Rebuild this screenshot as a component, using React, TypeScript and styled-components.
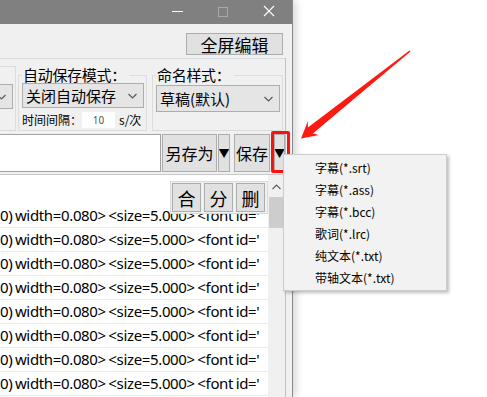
import React from 'react';
import styled, { createGlobalStyle } from 'styled-components';

const cjk = `"Noto Sans CJK SC", "Noto Sans", sans-serif`;
const latin = `"Noto Sans", "Noto Sans CJK SC", sans-serif`;

const GlobalStyle = createGlobalStyle`
  html, body {
    margin: 0;
    padding: 0;
    background: #ffffff;
  }
  body {
    font-family: ${cjk};
  }
`;

const rows = Array.from({ length: 8 }, () => `0) width=0.080> <size=5.000> <font id='`);
const saveTypes = ['字幕(*.srt)', '字幕(*.ass)', '字幕(*.bcc)', '歌词(*.lrc)', '纯文本(*.txt)', '带轴文本(*.txt)'];

const Chevron = ({ up }: { up?: boolean }) => (
    <svg width="9" height="6" viewBox="0 0 9 6">
        <polyline
            points={up ? '0.5,5 4.5,1 8.5,5' : '0.5,1 4.5,5 8.5,1'}
            fill="none"
            stroke={up ? '#606060' : '#5a5a5a'}
            strokeWidth="1.2"
        />
    </svg>
);

export default function App() {
    return (
        <Page>
            <GlobalStyle />
            <Window>
                <TitleBar>
                    <CaptionButton>
                        <svg width="46" height="24"><line x1="18" y1="11.5" x2="29" y2="11.5" stroke="#fff" /></svg>
                    </CaptionButton>
                    <CaptionButton>
                        <svg width="46" height="24"><rect x="18.5" y="7.5" width="9" height="9" fill="none" stroke="#a8a8a8" /></svg>
                    </CaptionButton>
                    <CaptionButton>
                        <svg width="46" height="24">
                            <line x1="18" y1="6" x2="28" y2="16" stroke="#fff" strokeWidth="1.1" />
                            <line x1="28" y1="6" x2="18" y2="16" stroke="#fff" strokeWidth="1.1" />
                        </svg>
                    </CaptionButton>
                </TitleBar>

                <TopBar>
                    <PushButton $w={97} $h={22} $fs={17}>全屏编辑</PushButton>
                </TopBar>

                <Pane>
                    <SettingsPanel>
                        <Group $left={-40} $w={56}>
                            <Combo $h={25} $mt={17}>
                                <span />
                                <Chevron />
                            </Combo>
                        </Group>
                        <Group $left={2} $w={129}>
                            <Legend>自动保存模式：</Legend>
                            <Combo $h={25} $mt={-1}>
                                <span>关闭自动保存</span>
                                <Chevron />
                            </Combo>
                            <IntervalRow>
                                <SmallLabel>时间间隔：</SmallLabel>
                                <NumberBox>10</NumberBox>
                                <SmallLabel $ml={4}>s/次</SmallLabel>
                            </IntervalRow>
                        </Group>
                        <Group $left={5} $w={131}>
                            <Legend>命名样式：</Legend>
                            <Combo $h={27} $mt={1}>
                                <span>草稿(默认)</span>
                                <Chevron />
                            </Combo>
                        </Group>
                    </SettingsPanel>

                    <SaveRow>
                        <NameInput />
                        <PushButton $w={55} $h={38} $fs={16}>另存为</PushButton>
                        <PushButton $w={12} $h={38} $fs={11}>▼</PushButton>
                        <PushButton $w={36} $h={38} $fs={16} $ml={3}>保存</PushButton>
                        <PushButton $w={11} $h={38} $fs={11} $ml={3}>▼</PushButton>
                    </SaveRow>

                    <ListArea>
                        <ListBody>
                            {rows.map((row, index) => (
                                <Row key={index}>{row}</Row>
                            ))}
                            <EditTools>
                                <PushButton $w={29} $h={29} $fs={18}>合</PushButton>
                                <PushButton $w={29} $h={29} $fs={18}>分</PushButton>
                                <PushButton $w={29} $h={29} $fs={18}>删</PushButton>
                            </EditTools>
                        </ListBody>
                        <ScrollBar>
                            <ScrollArrow><Chevron up /></ScrollArrow>
                            <ScrollThumb />
                        </ScrollBar>
                    </ListArea>
                </Pane>
            </Window>

            <Highlight />

            <DropMenu>
                {saveTypes.map((item) => (
                    <MenuItem key={item}>{item}</MenuItem>
                ))}
            </DropMenu>

            <Arrow width="115" height="93" viewBox="298 48 115 93">
                <polygon
                    points="409.5,50.4 307.9,127.4 307.9,120.9 301,138.5 319.1,135.1 312.9,133.6 410.5,51.6"
                    fill="#fb1b12"
                />
            </Arrow>
        </Page>
    );
}

const Page = styled.div`
    position: relative;
    width: 487px;
    height: 397px;
    overflow: hidden;
    background: #ffffff;
    display: flex;
`
const Window = styled.div`
    width: 292px;
    height: 397px;
    flex-shrink: 0;
    display: flex;
    flex-direction: column;
    background: #f0f0f0;
    box-shadow: 1px 0 0 #8a8a8a, 3px 0 9px rgba(0, 0, 0, 0.2);
`
const TitleBar = styled.div`
    height: 24px;
    flex-shrink: 0;
    background: #808080;
    display: flex;
    justify-content: flex-end;
`
const CaptionButton = styled.div`
    width: 46px;
    height: 24px;
    svg { display: block; }
`
const TopBar = styled.div`
    height: 34px;
    flex-shrink: 0;
    box-sizing: border-box;
    padding: 9px 9px 0 0;
    display: flex;
    justify-content: flex-end;
    align-items: flex-start;
`
const PushButton = styled.div<{ $w: number; $h: number; $fs: number; $ml?: number }>`
    width: ${p => p.$w}px;
    height: ${p => p.$h}px;
    margin-left: ${p => p.$ml ?? 0}px;
    flex-shrink: 0;
    box-sizing: border-box;
    border: 1px solid #adadad;
    background: #e1e1e1;
    display: flex;
    align-items: center;
    justify-content: center;
    font-family: ${cjk};
    font-size: ${p => p.$fs}px;
    color: #000;
    white-space: nowrap;
    overflow: hidden;
`
const Pane = styled.div`
    flex: 1;
    display: flex;
    flex-direction: column;
    margin-right: 6px;
    border-right: 1px solid #c2c2c2;
    min-height: 0;
`
const SettingsPanel = styled.div`
    height: 75px;
    flex-shrink: 0;
    box-sizing: border-box;
    border-top: 1px solid #d6dbe0;
    display: flex;
    align-items: flex-start;
`
const Group = styled.fieldset<{ $left: number; $w: number }>`
    margin: 7px 0 0 ${p => p.$left}px;
    width: ${p => p.$w}px;
    height: 65px;
    box-sizing: border-box;
    flex-shrink: 0;
    padding: 0 2px 0 3px;
    border: 1px solid #dcdcdc;
    min-width: 0;
`
const Legend = styled.legend`
    margin-left: 0;
    padding: 0 3px 0 1px;
    font-family: ${cjk};
    font-size: 15px;
    line-height: 18px;
    letter-spacing: -0.3px;
    color: #000;
`
const Combo = styled.div<{ $h: number; $mt: number }>`
    height: ${p => p.$h}px;
    margin-top: ${p => p.$mt}px;
    box-sizing: border-box;
    border: 1px solid #adadad;
    background: #e5e5e5;
    display: flex;
    align-items: center;
    justify-content: space-between;
    padding: 0 6px 0 3px;
    font-family: ${cjk};
    font-size: 15px;
    color: #000;
    svg { display: block; }
`
const IntervalRow = styled.div`
    margin-top: 4px;
    height: 16px;
    display: flex;
    align-items: center;
`
const SmallLabel = styled.span<{ $ml?: number }>`
    margin-left: ${p => p.$ml ?? 0}px;
    font-family: ${cjk};
    font-size: 12px;
    line-height: 16px;
    color: #000;
`
const NumberBox = styled.div`
    width: 33px;
    height: 16px;
    background: #ffffff;
    display: flex;
    align-items: center;
    justify-content: center;
    font-family: ${latin};
    font-size: 10px;
    color: #555;
`
const SaveRow = styled.div`
    height: 41px;
    flex-shrink: 0;
    box-sizing: border-box;
    padding-top: 1px;
    display: flex;
    align-items: flex-start;
    gap: 1px;
`
const NameInput = styled.div`
    width: 165px;
    height: 38px;
    margin-left: -2px;
    box-sizing: border-box;
    border: 1px solid #a2a2a2;
    background: #ffffff;
`
const ListArea = styled.div`
    flex: 1;
    min-height: 0;
    display: flex;
    border-top: 1px solid #c9c9c9;
`
const ListBody = styled.div`
    position: relative;
    flex: 1;
    background: #ffffff;
    overflow: hidden;
    padding-top: 29px;
`
const Row = styled.div`
    height: 24px;
    box-sizing: border-box;
    border-bottom: 1px solid #ececec;
    font-family: ${latin};
    font-size: 15px;
    line-height: 23px;
    letter-spacing: -0.35px;
    word-spacing: -1px;
    color: #000;
    white-space: nowrap;
`
const EditTools = styled.div`
    position: absolute;
    left: 170px;
    top: 6px;
    width: 98px;
    height: 33px;
    box-sizing: border-box;
    padding: 1px;
    border: 1px solid #dadada;
    background: #f0f0f0;
    display: flex;
    gap: 3px;
`
const ScrollBar = styled.div`
    width: 17px;
    background: #f0f0f0;
    display: flex;
    flex-direction: column;
    align-items: center;
`
const ScrollArrow = styled.div`
    height: 22px;
    width: 17px;
    display: flex;
    align-items: center;
    justify-content: center;
    padding-top: 2px;
    box-sizing: border-box;
    svg { display: block; }
`
const ScrollThumb = styled.div`
    width: 15px;
    height: 31px;
    background: #cdcdcd;
`
const Highlight = styled.div`
    position: absolute;
    left: 271px;
    top: 131px;
    width: 19px;
    height: 42px;
    box-sizing: border-box;
    border: 3px solid #ff1010;
    border-radius: 2px;
`
const DropMenu = styled.div`
    position: absolute;
    left: 283px;
    top: 154px;
    width: 164px;
    height: 137px;
    box-sizing: border-box;
    padding-top: 2px;
    background: #f2f2f2;
    border: 1px solid #cccccc;
    box-shadow: 2px 2px 3px rgba(0, 0, 0, 0.25);
`
const MenuItem = styled.div`
    height: 22px;
    padding-left: 31px;
    font-family: ${cjk};
    font-size: 12px;
    line-height: 22px;
    color: #000;
    white-space: nowrap;
`
const Arrow = styled.svg`
    position: absolute;
    left: 298px;
    top: 48px;
    pointer-events: none;
`
